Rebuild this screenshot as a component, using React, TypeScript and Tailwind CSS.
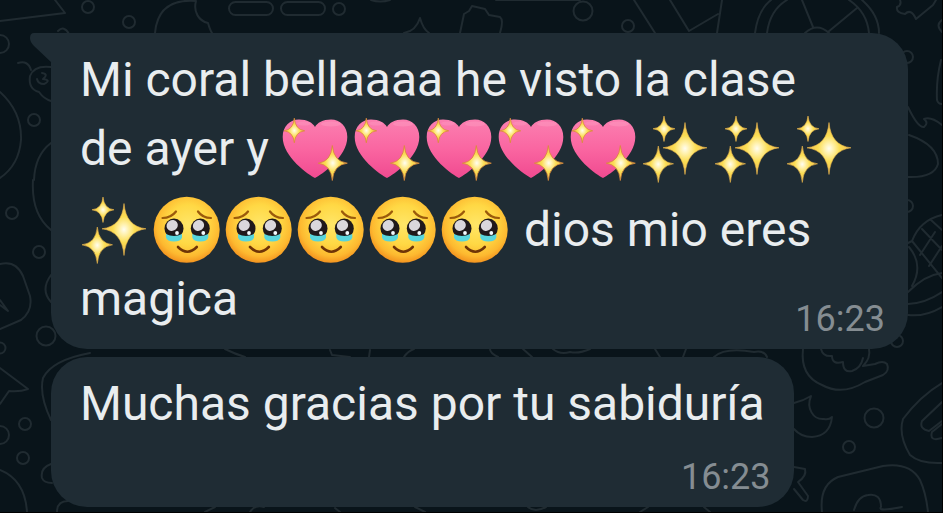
import type { ReactNode } from "react";

function star(cx: number, cy: number, top: number, right: number, bottom: number, left: number) {
  const k = 0.09;
  const up = cy - (cy - top) * k;
  const down = cy + (bottom - cy) * k;
  const east = cx + (right - cx) * k;
  const west = cx - (cx - left) * k;
  return `M${cx} ${top} Q${east} ${up} ${right} ${cy} Q${east} ${down} ${cx} ${bottom} Q${west} ${down} ${left} ${cy} Q${west} ${up} ${cx} ${top}Z`;
}

function Emoji({ label, children }: { label: string; children: ReactNode }) {
  return (
    <svg role="img" aria-label={label} viewBox="2 0 72 68" className="h-[68px] w-[72px] shrink-0">
      {children}
    </svg>
  );
}

function SparklingHeart() {
  return (
    <Emoji label="💖">
      <path
        d="M36 63 C30 60 3.700 42 3.700 22 C3.700 11 11 4.500 20 4.500 C28 4.500 34 8 36 12 C38 8 44 4.500 52 4.500 C61 4.500 68.300 11 68.300 22 C68.300 42 42 60 36 63Z"
        fill="url(#heart)"
      />
      <ellipse cx="52" cy="9" rx="10" ry="2.500" fill="#ffa5c9" opacity=".35" />
      <ellipse cx="25" cy="8.500" rx="7" ry="2" fill="#ffa5c9" opacity=".3" />
      <path d={star(15.3, 15.8, 3.2, 25.7, 27.8, 5)} fill="url(#spark)" stroke="#d98a3a" strokeWidth=".8" />
      <path d={star(53.3, 48.2, 30.5, 68.3, 65.5, 39.3)} fill="url(#spark)" stroke="#d98a3a" strokeWidth=".8" />
    </Emoji>
  );
}

function Sparkles() {
  return (
    <Emoji label="✨">
      <g stroke="#e9b54a" strokeWidth=".6">
        <path d={star(46, 32.8, 7.5, 68, 59.5, 24)} fill="url(#spark)" />
        <path d={star(25, 13.8, 1, 36, 26.5, 14)} fill="url(#spark)" />
        <path d={star(19.3, 48.8, 31, 34.5, 67.5, 4)} fill="url(#spark)" />
      </g>
    </Emoji>
  );
}

function Eye({ cx }: { cx: number }) {
  return (
    <g>
      <ellipse cx={cx} cy="32.500" rx="9.500" ry="10" fill="#20191b" />
      <path d={`M${cx - 8} 38 Q${cx} 42 ${cx + 8} 38 V41.500 Q${cx + 7} 45.500 ${cx} 45.500 Q${cx - 7} 45.500 ${cx - 8} 41.500Z`} fill="#58d5dc" />
      <ellipse cx={cx - 1.8} cy="29.500" rx="5.800" ry="5.300" fill="#dad7dc" transform={`rotate(-35 ${cx - 1.8} 29.500)`} />
      <circle cx={cx + 3} cy="37" r="1.900" fill="#f4fbff" />
    </g>
  );
}

function TearfulFace() {
  return (
    <Emoji label="🥹">
      <circle cx="36.700" cy="33.800" r="33" fill="url(#face)" />
      <Eye cx={24} />
      <Eye cx={50.3} />
      <path d="M12.500 22 Q21 22 26 15.500 M61 22 Q52.500 22 48 15.500" fill="none" stroke="#9b5a0b" strokeWidth="2.200" strokeLinecap="round" />
      <path d="M28 51 Q37.300 60.500 46.800 51" fill="none" stroke="#6f3407" strokeWidth="2.600" strokeLinecap="round" />
    </Emoji>
  );
}

function Wallpaper() {
  return (
    <svg
      aria-hidden="true"
      viewBox="0 0 942 512"
      preserveAspectRatio="xMinYMin slice"
      className="absolute inset-0 -z-10 h-full w-full"
    >
      <defs>
        <linearGradient id="heart" x1="0" y1="0" x2="0" y2="1">
          <stop offset="0" stopColor="#fb7fb0" />
          <stop offset=".5" stopColor="#fa66a1" />
          <stop offset="1" stopColor="#f04a90" />
        </linearGradient>
        <radialGradient id="spark" cx=".5" cy=".5" r=".5">
          <stop offset="0" stopColor="#fffdf0" />
          <stop offset=".22" stopColor="#fff0a8" />
          <stop offset=".5" stopColor="#fbdd52" />
          <stop offset="1" stopColor="#eebb55" />
        </radialGradient>
        <radialGradient id="face" cx=".52" cy=".42" r=".6">
          <stop offset="0" stopColor="#ffe668" />
          <stop offset=".5" stopColor="#ffd844" />
          <stop offset=".8" stopColor="#fdb930" />
          <stop offset="1" stopColor="#f18c1c" />
        </radialGradient>
      </defs>
      <g fill="none" stroke="#202b31" strokeWidth="2" strokeLinecap="round" strokeLinejoin="round">
        <circle cx="88" cy="7" r="6" />
        <circle cx="129" cy="22" r="6" />
        <circle cx="0" cy="44" r="9" />
        <circle cx="34" cy="120" r="6" />
        <path d="M55 0 L65 13 L0 21 M58 31 Q64 25 69 34" />
        <path d="M155 33 Q158 -2 196 1 C193 12 199 21 208 23 Q210 30 212 33" />
        <rect x="229" y="2" width="44" height="13" rx="6.500" />
        <rect x="281" y="2" width="44" height="13" rx="6.500" />
        <circle cx="339" cy="9" r="6" />
        <path d="M18 63 Q28 60 31 70 M51 67 Q34 65 30 76 Q28 89 39 92 Q44 99 51 101 M42 73 Q49 74 43 79 Q52 80 44 84 Q38 84 37 79" />
        <path d="M0 92 Q22 112 21 140 Q19 165 0 178 M51 143 Q35 155 34 180" />
        <path d="M371 0 Q380 3 390 0 M404 33 Q416 31 420 18 Q423 29 429 33" />
        <path d="M460 33 L464 14 L469 11 L472 6 L485 9 L489 15 L500 17 Q504 20 500 33" />
        <path d="M496 0 H580" />
        <circle cx="583" cy="11" r="9.500" />
        <circle cx="628" cy="26" r="6" />
        <path d="M634 0 L655 33 M670 0 L689 31 L718 14 M722 0 L717 33" />
        <path d="M755 33 Q758 10 771 0 M767 33 Q770 10 787 0 M802 0 L813 27 M828 32 L857 8 M805 33 Q817 22 829 33 M849 0 Q867 12 869 33 M862 0 Q879 15 879 33" />
        <path d="M900 0 Q902 5 897 7 Q896 13 905 14 Q911 8 916 19 L933 5 L936 0 M942 20 Q935 25 942 32" />
        <circle cx="907" cy="57" r="6" />
        <path d="M941 60 Q936 80 937 100 Q938 104 942 104 M908 107 Q918 128 924 127 Q929 123 924 119 Q931 116 942 125 M909 135 Q938 145 938 164 Q934 178 908 177" />
        <circle cx="907" cy="206" r="6" />
        <path d="M942 215 Q920 220 912 241 L908 243 M912 241 L942 278 M922 229 L942 250 M931 220 L942 230 M920 255 L935 232 M929 266 L942 246 M909 247 Q924 265 912 286 M908 292 Q925 275 942 273 M908 304 Q926 303 942 292 M908 315 Q925 317 942 307" />
        <circle cx="12" cy="213" r="6" />
        <circle cx="39" cy="252" r="6" />
        <circle cx="46" cy="336" r="9.500" />
        <circle cx="0" cy="348" r="5.500" />
        <circle cx="25" cy="424" r="6" />
        <circle cx="0" cy="435" r="9" />
        <circle cx="23" cy="458" r="6" />
        <path d="M33 180 Q31 214 51 230 M51 275 Q40 290 51 302 M0 264 Q16 260 23 276 L30 296 Q33 311 21 320 L0 329 M0 305 L8 311 L0 300" />
        <path d="M0 368 L28 389 Q20 392 9 391 L0 404 M90 353 Q52 360 43 378 Q39 395 51 420 M51 464 Q40 468 42 478 Q44 483 52 483 M0 470 Q25 480 27 512 M57 512 Q57 501 68 501" />
        <path d="M225 349 Q235 354 245 357 M330 350 L332 355 L350 357 M370 350 L369 357 M404 357 Q408 351 414 349 M490 349 Q490 353 498 357 M523 349 L532 357 M553 349 Q560 355 570 352 Q579 354 590 349 M655 349 L660 357 M686 349 L683 357 M714 357 Q725 347 754 352 Q764 350 767 357" />
        <path d="M803 349 Q800 376 822 385 Q842 396 865 382 L883 375 Q890 371 887 364 Q883 360 875 364 L863 366 M821 349 Q823 357 832 356 Q832 365 843 362 Q843 373 852 371 Q861 368 863 358 M869 349 Q871 358 863 366" />
        <circle cx="897" cy="341" r="6" />
        <path d="M794 403 Q803 401 811 396 C806 408 813 420 824 419 Q829 420 832 417 Q830 436 812 437 Q801 437 794 429" />
        <circle cx="874" cy="418" r="9.500" />
        <circle cx="849" cy="447" r="6" />
        <path d="M942 383 Q920 396 903 419 Q898 435 910 455 Q920 464 942 463 M942 402 L922 421 Q919 429 929 431 L942 421 M942 424 L932 432 Q929 442 942 438" />
        <path d="M822 512 Q819 485 838 477 L883 466 Q910 462 920 480 Q926 493 928 512 M854 510 Q858 496 868 495 Q881 493 881 507 Q877 512 902 507" />
        <path d="M794 467 L805 469 Q807 476 798 482 L808 496 Q808 503 803 500 L794 489" />
        <path d="M205 512 L215 507 M250 512 Q255 504 264 507 M335 508 L340 512 M415 507 L425 512 M528 507 Q535 513 546 507 M640 512 L648 507 M704 507 L710 512" />
      </g>
    </svg>
  );
}

function Time({ children }: { children: ReactNode }) {
  return <time className="text-[36px] leading-[42px] text-[#858d92]">{children}</time>;
}

export default function App() {
  return (
    <main className="relative isolate flex min-h-screen flex-col items-start gap-2 overflow-hidden border-r border-b border-black bg-[#09141a] pt-[33px] pr-[34px] pb-[5px] pl-[51px] font-['Roboto',sans-serif] text-[48px] leading-[69px] text-[#e9edef]">
      <Wallpaper />
      <article className="relative w-full rounded-[36px] rounded-tl-none bg-[#1f2c34] pt-3 pr-[23px] pb-[9px] pl-[29px]">
        <svg aria-hidden="true" viewBox="0 0 22 30" className="absolute top-0 -left-[21px] h-[30px] w-[22px] fill-[#1f2c34]">
          <path d="M22 0 H4 Q0 0 0 5 Q0 9 4 13 L22 30Z" />
        </svg>
        <p className="whitespace-pre">Mi coral bellaaaa he visto la clase</p>
        <p className="flex h-[69px] items-center whitespace-pre">
          <span>de ayer y </span>
          {[0, 1, 2, 3, 4].map((n) => <SparklingHeart key={n} />)}
          {[0, 1, 2].map((n) => <Sparkles key={n} />)}
        </p>
        <p className="mt-3 flex h-[69px] items-center whitespace-pre">
          <Sparkles />
          {[0, 1, 2, 3, 4].map((n) => <TearfulFace key={n} />)}
          <span> dios mio eres</span>
        </p>
        <div className="flex items-end justify-between">
          <p className="mb-[7px]">magica</p>
          <Time>16:23</Time>
        </div>
      </article>
      <article className="flex flex-col items-end rounded-[36px] bg-[#1f2c34] pt-3 pr-[23px] pb-[9px] pl-[29px]">
        <p className="mr-[6px] mb-[18px] whitespace-pre">Muchas gracias por tu sabiduría</p>
        <Time>16:23</Time>
      </article>
    </main>
  );
}
